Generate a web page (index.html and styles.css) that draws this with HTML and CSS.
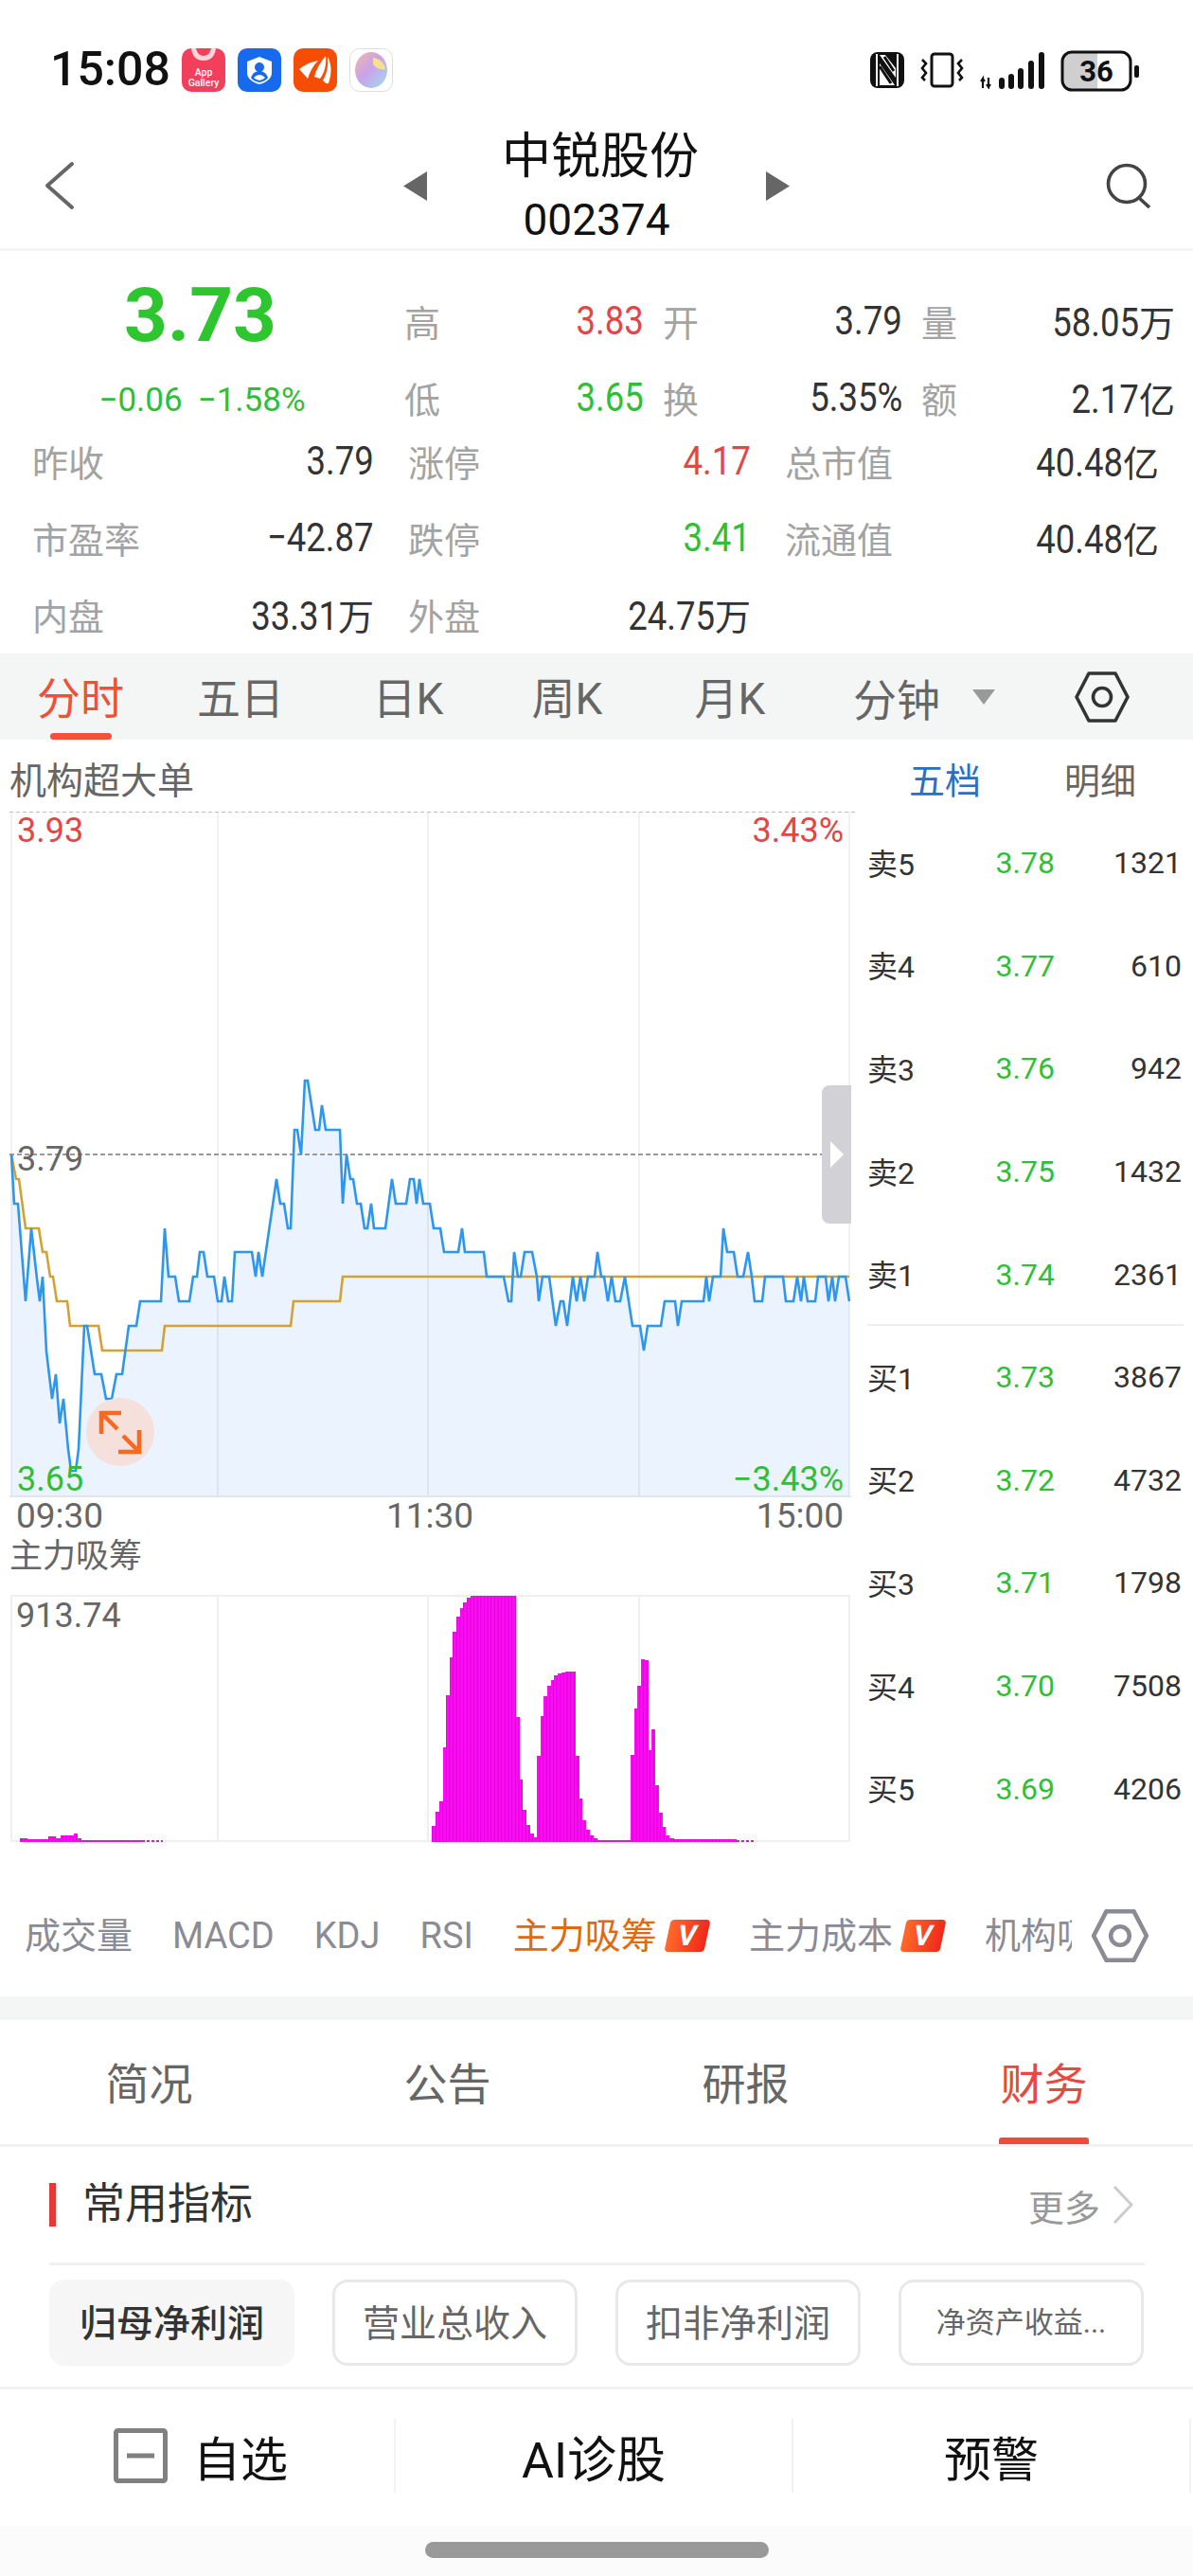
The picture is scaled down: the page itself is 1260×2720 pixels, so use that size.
FILE: index.html
```html
<!DOCTYPE html>
<html lang="zh-CN">
<head>
  <meta charset="UTF-8" />
  <title>中锐股份 002374</title>
  <link rel="stylesheet" href="styles.css">
</head>
<body>
  <div class="statusbar">
    <span class="clock">15:08</span>
    <svg class="app-icon" viewBox="0 0 46 46">
      <rect width="46" height="46" rx="10" fill="#f2405c"/>
      <path d="M10 0c1 9 6 13 13 13s12-4 13-13h-5c-1 5-4 8-8 8s-7-3-8-8z" fill="#fbd5da"/>
      <text x="23" y="29" text-anchor="middle" class="app-text">App</text>
      <text x="23" y="40" text-anchor="middle" class="app-text">Gallery</text>
    </svg>
    <svg class="app-icon" viewBox="0 0 46 46">
      <rect width="46" height="46" rx="10" fill="#1769ee"/>
      <path d="M23 9l13 5v12c0 6-6 10-13 12-7-2-13-6-13-12V14z" fill="#fff"/>
      <circle cx="23" cy="20" r="5" fill="#1769ee"/>
      <path d="M14 31c2-5 5-7 9-7s7 2 9 7c-2 3-5 4-9 5-4-1-7-2-9-5z" fill="#1769ee"/>
      <path d="M17 31c2-2 4-3 6-3s4 1 6 3c-2 2-4 2-6 3-2-1-4-1-6-3z" fill="#fff"/>
    </svg>
    <svg class="app-icon" viewBox="0 0 46 46">
      <rect width="46" height="46" rx="10" fill="#f64d04"/>
      <path d="M6 22c6-5 13-8 20-9-5 5-9 12-11 19-3-3-6-7-9-10z" fill="#fff"/>
      <path d="M22 30c2-8 6-15 12-22 1 8-1 18-6 24z" fill="#fff"/>
      <path d="M31 34c4-7 6-15 5-25 4 7 5 16 1 28-2 1-4-1-6-3z" fill="#fff"/>
    </svg>
    <svg class="app-icon" viewBox="0 0 46 46">
      <defs>
        <linearGradient id="orb" x1="0" y1="0" x2="1" y2="1">
          <stop offset="0" stop-color="#f8b6a8"/>
          <stop offset=".45" stop-color="#c9a2ea"/>
          <stop offset="1" stop-color="#9fdcec"/>
        </linearGradient>
      </defs>
      <rect x=".5" y=".5" width="45" height="45" rx="10" fill="#fff" stroke="#ddd"/>
      <ellipse cx="23" cy="23" rx="17" ry="19" fill="url(#orb)"/>
      <path d="M25 10c6 0 12 5 13 12-5 1-10-1-13-5z" fill="#f6e08e"/>
    </svg>

    <div class="status-right">
      <svg class="st-nfc" viewBox="0 0 36 38">
        <rect width="36" height="38" rx="8" fill="#111"/>
        <path d="M7 2v34M29 2v34" stroke="#fff" stroke-width="2"/>
        <path d="M10 3l17 24V17L16 3zM10 35V12l16 23z" fill="#fff"/>
        <path d="M10 15l12 18M15 5l10 15" stroke="#111" stroke-width="3"/>
      </svg>
      <svg class="st-vib" viewBox="0 0 48 38">
        <rect x="13" y="2" width="22" height="34" rx="3" fill="none" stroke="#111" stroke-width="3"/>
        <path d="M3 8l4 4-4 5 4 5-4 5 3 3M45 8l-4 4 4 5-4 5 4 5-3 3" fill="none" stroke="#111" stroke-width="2.6"/>
      </svg>
      <svg class="st-signal" viewBox="0 0 69 40">
        <path d="M3 39V29l-2 3M3 29l2 3M9 28v10l-2-3M9 38l2-3" fill="none" stroke="#111" stroke-width="2.2"/>
        <rect x="20" y="28" width="6" height="12" rx="3" fill="#111"/>
        <rect x="30" y="24" width="6" height="16" rx="3" fill="#111"/>
        <rect x="40" y="18" width="6" height="22" rx="3" fill="#111"/>
        <rect x="51" y="10" width="6" height="30" rx="3" fill="#111"/>
        <rect x="62" y="1" width="6" height="39" rx="3" fill="#111"/>
      </svg>
      <svg class="st-batt" viewBox="0 0 83 44">
        <path d="M10 3h29v38H10a7 7 0 0 1-7-7V10a7 7 0 0 1 7-7z" fill="#cfcfcf"/>
        <rect x="2" y="2" width="72" height="40" rx="10" fill="none" stroke="#111" stroke-width="3"/>
        <rect x="78" y="16" width="5" height="13" rx="2" fill="#111"/>
        <text x="38" y="33" text-anchor="middle" class="batt-text">36</text>
      </svg>
    </div>
  </div>

  <header class="nav">
    <div class="nav-side">
      <svg class="back" viewBox="0 0 34 52"><path d="M30 3L4 26l26 23" fill="none" stroke="#666" stroke-width="4" stroke-linecap="round" stroke-linejoin="round"/></svg>
      <svg class="nav-tri" viewBox="0 0 25 31"><path d="M25 0v31L0 15.5z" fill="#666"/></svg>
    </div>
    <div class="nav-title">
      <div class="stock-name">中锐股份</div>
      <div class="stock-code">002374</div>
    </div>
    <div class="nav-side nav-side-right">
      <svg class="nav-tri" viewBox="0 0 25 31"><path d="M0 0v31l25-15.5z" fill="#666"/></svg>
      <svg class="search" viewBox="0 0 48 48"><circle cx="22" cy="22" r="19.5" fill="none" stroke="#444" stroke-width="3.6"/><path d="M34 36l12 11" stroke="#444" stroke-width="3.6"/></svg>
    </div>
  </header>

  <section class="quote">
    <div class="price">3.73</div>
    <span class="lbl">高</span><span class="val red"><span class="num">3.83</span></span>
    <span class="lbl">开</span><span class="val"><span class="num">3.79</span></span>
    <span class="lbl">量</span><span class="val"><span class="num">58.05</span>万</span>
    <div class="change"><span>−0.06</span><span>−1.58%</span></div>
    <span class="lbl">低</span><span class="val green"><span class="num">3.65</span></span>
    <span class="lbl">换</span><span class="val"><span class="num">5.35%</span></span>
    <span class="lbl">额</span><span class="val"><span class="num">2.17</span>亿</span>
  </section>

  <section class="stats">
    <div class="stat"><span class="lbl">昨收</span><span class="val"><span class="num">3.79</span></span></div>
    <div class="stat"><span class="lbl">涨停</span><span class="val red"><span class="num">4.17</span></span></div>
    <div class="stat"><span class="lbl">总市值</span><span class="val"><span class="num">40.48</span>亿</span></div>
    <div class="stat"><span class="lbl">市盈率</span><span class="val"><span class="num">−42.87</span></span></div>
    <div class="stat"><span class="lbl">跌停</span><span class="val green"><span class="num">3.41</span></span></div>
    <div class="stat"><span class="lbl">流通值</span><span class="val"><span class="num">40.48</span>亿</span></div>
    <div class="stat"><span class="lbl">内盘</span><span class="val"><span class="num">33.31</span>万</span></div>
    <div class="stat"><span class="lbl">外盘</span><span class="val"><span class="num">24.75</span>万</span></div>
  </section>

  <nav class="period-tabs">
    <div class="ptab active">分时<i class="ptab-line"></i></div>
    <div class="ptab">五日</div>
    <div class="ptab">日K</div>
    <div class="ptab">周K</div>
    <div class="ptab">月K</div>
    <div class="ptab-more">
      <span>分钟</span>
      <i class="tri-down"></i>
      <svg class="hex" viewBox="0 0 58 54"><path d="M15 2h28l13 25-13 25H15L2 27z" fill="none" stroke="#333" stroke-width="3.6" stroke-linejoin="round"/><circle cx="29" cy="27" r="9.5" fill="none" stroke="#333" stroke-width="3.6"/></svg>
    </div>
  </nav>

  <section class="market">
    <div class="charts">
      <div class="chart-title">机构超大单</div>
      <svg class="price-chart" viewBox="0 857 905 726">
        <path class="area" d="M12 1219L15 1271H19L27 1374L33 1297L39 1350L42 1374L45 1348L49 1427L55 1477L59 1451L63 1503L67 1477L72 1530L75 1553H80L83 1530L89 1400H92L100 1451H107L112 1477H118L123 1451H129L136 1400H144L148 1374H170L174 1297L178 1348H185L189 1374H200L204 1348H208L211 1322H215L219 1348H226L230 1374H234L237 1348L241 1374H245L248 1322H266L270 1348L273 1322L277 1348L292 1245L296 1271H300L304 1297H307L311 1193H314L318 1219L322 1141H325L333 1193H337L340 1167L344 1193H359L362 1271L366 1219L370 1245H373L377 1271H381L385 1297H388L392 1271L395 1297H407L414 1245L418 1271H429L433 1245H437L440 1271L443 1245L447 1271H454L458 1297H465L469 1322H484L488 1297L491 1322H511L514 1348H532L537 1374H540L543 1322L547 1348H550L554 1322H562L567 1348L569 1374L573 1348H580L587 1400L592 1374H595L599 1400L605 1348L609 1374L613 1348L617 1374L621 1348H628L631 1322L635 1348H638L642 1374L646 1348L650 1374H655L660 1348L668 1400H676L680 1426L684 1400H698L702 1374H713L716 1400L720 1374H743L746 1348L749 1374L753 1348H761L764 1297L768 1322H775L779 1348H785L790 1322L794 1348L797 1374H805L808 1348H827L830 1374H838L842 1348L846 1374L849 1348L853 1374H861L864 1348H872L875 1374L879 1348L882 1374L886 1348H893L897 1374V1580H12Z"/>
        <g class="grid">
          <path d="M12 857V1580M230 857V1580M452 857V1580M675 857V1580M897 857V1580"/>
        </g>
        <path class="axis" d="M10 1580H899"/>
        <path class="dash" d="M10 857H905"/>
        <path class="dash dash-mid" d="M10 1219H897"/>
        <path class="avg-line" d="M12 1219L17 1245H20L27 1297H41L45 1322H49L53 1348H56L60 1374H71L74 1400H104L108 1426H171L174 1400H307L310 1374H359L362 1348H897"/>
        <path class="price-line" d="M12 1219L15 1271H19L27 1374L33 1297L39 1350L42 1374L45 1348L49 1427L55 1477L59 1451L63 1503L67 1477L72 1530L75 1553H80L83 1530L89 1400H92L100 1451H107L112 1477H118L123 1451H129L136 1400H144L148 1374H170L174 1297L178 1348H185L189 1374H200L204 1348H208L211 1322H215L219 1348H226L230 1374H234L237 1348L241 1374H245L248 1322H266L270 1348L273 1322L277 1348L292 1245L296 1271H300L304 1297H307L311 1193H314L318 1219L322 1141H325L333 1193H337L340 1167L344 1193H359L362 1271L366 1219L370 1245H373L377 1271H381L385 1297H388L392 1271L395 1297H407L414 1245L418 1271H429L433 1245H437L440 1271L443 1245L447 1271H454L458 1297H465L469 1322H484L488 1297L491 1322H511L514 1348H532L537 1374H540L543 1322L547 1348H550L554 1322H562L567 1348L569 1374L573 1348H580L587 1400L592 1374H595L599 1400L605 1348L609 1374L613 1348L617 1374L621 1348H628L631 1322L635 1348H638L642 1374L646 1348L650 1374H655L660 1348L668 1400H676L680 1426L684 1400H698L702 1374H713L716 1400L720 1374H743L746 1348L749 1374L753 1348H761L764 1297L768 1322H775L779 1348H785L790 1322L794 1348L797 1374H805L808 1348H827L830 1374H838L842 1348L846 1374L849 1348L853 1374H861L864 1348H872L875 1374L879 1348L882 1374L886 1348H893L897 1374"/>
        <text x="18" y="889" class="ax red-fill">3.93</text>
        <text x="891" y="889" text-anchor="end" class="ax red-fill">3.43%</text>
        <text x="18" y="1236" class="ax grey-fill">3.79</text>
        <text x="18" y="1574" class="ax green-fill">3.65</text>
        <text x="891" y="1574" text-anchor="end" class="ax green-fill">−3.43%</text>
        <path d="M868 1154a8 8 0 0 1 8-8h23v146h-23a8 8 0 0 1-8-8z" fill="#d2d2d6"/>
        <path d="M877 1205l14 14-14 14z" fill="#fff"/>
        <circle cx="127" cy="1512" r="36" fill="#f6e0dc"/>
        <path d="M128 1492H107V1514M107 1492L124 1509M125 1533H147V1510M147 1533L130 1516" fill="none" stroke="#f56a1e" stroke-width="4.5"/>
      </svg>
      <div class="times"><span>09:30</span><span>11:30</span><span>15:00</span></div>
      <div class="sub-title">主力吸筹</div>
      <svg class="flow-chart" viewBox="0 1680 905 270">
        <defs>
          <pattern id="bars" patternUnits="userSpaceOnUse" width="3.65" height="10">
            <rect width="3.65" height="10" fill="#fb0cf2"/>
            <rect width=".9" height="10" fill="#dc00d6"/>
          </pattern>
        </defs>
        <path class="flow-grid" d="M12 1685H897V1944H12ZM230 1685V1944M452 1685V1944M675 1685V1944"/>
        <path fill="url(#bars)" d="M21 1945V1941H29V1942H51V1939H59V1941H64V1938H78V1936H82V1941H86V1943H150V1945Z"/>
        <path fill="url(#bars)" d="M456 1945V1928H460V1913H464V1902H468V1845H471V1790H475V1750H478V1723H482V1707H486V1698H489V1692H493V1687H497V1685H545V1813H549V1879H552V1911H556V1927H560V1936H564V1940H567V1854H571V1812H574V1791H578V1780H582V1774H585V1769H589V1767H593V1766H597V1765H608V1854H612V1899H615V1922H619V1932H623V1938H627V1941H631V1943H666V1853H670V1804H673V1780H677V1752H681V1753H685V1848H688V1826H692V1885H696V1914H700V1929H703V1938H707V1941H712V1942H778V1945Z"/>
        <path d="M150 1944H172M778 1944H798" stroke="#c626c6" stroke-width="2" stroke-dasharray="3 2"/>
        <text x="17" y="1718" class="ax grey-fill">913.74</text>
      </svg>
    </div>

    <aside class="book">
      <div class="book-tabs"><span class="blue">五档</span><span>明细</span></div>
      <div class="book-row"><span class="side">卖5</span><span class="p">3.78</span><span class="q">1321</span></div>
      <div class="book-row"><span class="side">卖4</span><span class="p">3.77</span><span class="q">610</span></div>
      <div class="book-row"><span class="side">卖3</span><span class="p">3.76</span><span class="q">942</span></div>
      <div class="book-row"><span class="side">卖2</span><span class="p">3.75</span><span class="q">1432</span></div>
      <div class="book-row"><span class="side">卖1</span><span class="p">3.74</span><span class="q">2361</span></div>
      <div class="book-rule"></div>
      <div class="book-row"><span class="side">买1</span><span class="p">3.73</span><span class="q">3867</span></div>
      <div class="book-row"><span class="side">买2</span><span class="p">3.72</span><span class="q">4732</span></div>
      <div class="book-row"><span class="side">买3</span><span class="p">3.71</span><span class="q">1798</span></div>
      <div class="book-row"><span class="side">买4</span><span class="p">3.70</span><span class="q">7508</span></div>
      <div class="book-row"><span class="side">买5</span><span class="p">3.69</span><span class="q">4206</span></div>
    </aside>
  </section>

  <div class="indicators">
    <span>成交量</span>
    <span>MACD</span>
    <span>KDJ</span>
    <span>RSI</span>
    <span class="ind-on">主力吸筹</span><i class="vip">V</i>
    <span>主力成本</span><i class="vip">V</i>
    <span class="ind-clip">机构吸筹</span>
    <svg class="ind-hex" viewBox="0 0 58 54"><path d="M15 2h28l13 25-13 25H15L2 27z" fill="none" stroke="#8b8b95" stroke-width="4.4" stroke-linejoin="round"/><circle cx="29" cy="27" r="9.5" fill="none" stroke="#8b8b95" stroke-width="4.4"/></svg>
  </div>

  <div class="band"></div>

  <nav class="detail-tabs">
    <div class="dtab">简况</div>
    <div class="dtab">公告</div>
    <div class="dtab">研报</div>
    <div class="dtab active">财务<i class="dtab-line"></i></div>
  </nav>

  <section class="finance">
    <div class="finance-head">
      <h2>常用指标</h2>
      <span class="more">更多</span>
      <svg class="more-arrow" viewBox="0 0 22 40"><path d="M2 1l18 19L2 39" fill="none" stroke="#ccc" stroke-width="3"/></svg>
    </div>
    <div class="chips">
      <div class="chip chip-on">归母净利润</div>
      <div class="chip">营业总收入</div>
      <div class="chip">扣非净利润</div>
      <div class="chip chip-small">净资产收益...</div>
    </div>
  </section>

  <footer class="actions">
    <div class="action action-watch">
      <svg class="watch" viewBox="0 0 57 58"><rect x="2.5" y="2.5" width="52" height="53" rx="2" fill="none" stroke="#808080" stroke-width="5"/><path d="M14 29h29" stroke="#808080" stroke-width="5"/></svg>
      自选
    </div>
    <div class="action action-wide">AI诊股</div>
    <div class="action">预警</div>
  </footer>

  <div class="home-area"><div class="home-bar"></div></div>
</body>
</html>
```

FILE: styles.css
```css
* { box-sizing: border-box; }
html, body { margin: 0; padding: 0; }
body { width: 1260px; height: 2720px; overflow: hidden; background: #fff; color: #333; font-family: Roboto, "Noto Sans CJK SC", sans-serif; }
i { font-style: normal; }
svg { display: block; flex: none; }

.statusbar { height: 130px; display: flex; align-items: flex-start; padding: 51px 57px 0 53px; }
.clock { font-size: 50px; line-height: 44px; font-weight: 500; color: #111; margin-right: 12px; }
.app-icon { width: 46px; height: 46px; margin-right: 13px; }
.app-text { font: 500 10.5px Roboto, sans-serif; fill: #fff; }
.status-right { margin-left: auto; display: flex; gap: 16px; align-items: flex-end; height: 46px; }
.st-nfc { width: 36px; height: 38px; margin-bottom: 4px; }
.st-vib { width: 48px; height: 38px; margin-bottom: 4px; }
.st-signal { width: 69px; height: 40px; margin-bottom: 3px; }
.st-batt { width: 83px; height: 44px; }
.batt-text { font: 700 31px Roboto, sans-serif; fill: #111; }

.nav { height: 135px; display: grid; grid-template-columns: 1fr 200px 1fr; column-gap: 79px; border-bottom: 3px solid #f4f6f6; }
.nav-side { display: flex; align-items: center; justify-content: space-between; padding-left: 46px; }
.nav-side-right { padding-left: 0; padding-right: 44px; }
.back { width: 34px; height: 52px; }
.nav-tri { width: 25px; height: 31px; }
.search { width: 48px; height: 48px; }
.nav-title { text-align: center; padding-top: 6px; white-space: nowrap; }
.stock-name { font-size: 52px; line-height: 60px; color: #111; }
.stock-code { font-size: 46px; line-height: 60px; margin-top: 6px; color: #111; }

.lbl { font-size: 38px; color: #a3a3a3; white-space: nowrap; }
.val { font-size: 38px; color: #333; text-align: right; white-space: nowrap; }
.num { display: inline-block; font-size: 43px; transform: scaleX(.85); transform-origin: right center; }
.red { color: #e24646; }
.green { color: #2fbf37; }

.quote { display: grid; grid-template-columns: 407px 38px 195px 38px 195px 38px 210px; column-gap: 20px; row-gap: 21px; grid-auto-rows: 60px; align-items: center; padding-top: 43px; }
.price { font-size: 80px; line-height: 60px; font-weight: 700; color: #2dc62f; text-align: center; padding-left: 16px; margin-top: -11px; }
.change { display: flex; justify-content: center; gap: 16px; padding: 6px 0 0 20px; font-size: 35px; color: #2fbf37; }

.stats { display: grid; grid-template-columns: 361px 362px 395px; column-gap: 36px; row-gap: 21px; grid-auto-rows: 60px; padding: 7px 0 0 34px; }
.stat { display: flex; align-items: center; justify-content: space-between; }

.period-tabs { height: 91px; margin-top: 12px; background: #f4f6f6; display: grid; grid-template-columns: 170px 168px 186px 150px 194px 392px; align-items: center; font-size: 46px; color: #666; }
.ptab { height: 91px; padding-top: 5px; line-height: 86px; text-align: center; display: flex; flex-direction: column; align-items: center; }
.ptab.active { color: #ee5038; }
.ptab-line { display: block; width: 65px; height: 8px; border-radius: 4px; background: #f5503a; margin-top: -7px; }
.ptab-more { display: flex; align-items: center; padding-left: 33px; }
.tri-down { width: 0; height: 0; margin-left: 34px; border-left: 12.5px solid transparent; border-right: 12.5px solid transparent; border-top: 16px solid #999; }
.hex { width: 58px; height: 54px; margin-left: 84px; }

.market { display: flex; height: 1169px; }
.charts { width: 905px; }
.chart-title { height: 76px; padding: 24px 0 0 10px; font-size: 39px; line-height: 40px; color: #666; }
.price-chart { width: 905px; height: 726px; }
.area { fill: #eaf3fe; }
.grid path { stroke: rgba(30, 50, 80, .07); stroke-width: 2; fill: none; }
.axis { stroke: #dfe6ee; stroke-width: 2; }
.dash { stroke: #aaa; stroke-width: 1.5; stroke-dasharray: 4 3; }
.dash-mid { stroke: #999; stroke-width: 2; stroke-dasharray: 5 3; }
.avg-line { fill: none; stroke: #d3a237; stroke-width: 2.6; }
.price-line { fill: none; stroke: #2f96ee; stroke-width: 2.6; }
.ax { font: 36px Roboto, sans-serif; }
.red-fill { fill: #e24646; }
.green-fill { fill: #2fbf37; }
.grey-fill { fill: #666; }
.times { height: 36px; line-height: 36px; display: flex; justify-content: space-between; padding: 0 14px 0 17px; font-size: 37px; color: #666; }
.sub-title { height: 61px; padding-left: 10px; font-size: 35px; line-height: 50px; color: #666; }
.flow-chart { width: 905px; height: 270px; }
.flow-grid { fill: none; stroke: #efefef; stroke-width: 2; }

.book { width: 355px; font-size: 32px; color: #333; }
.book-tabs { height: 76px; display: flex; gap: 88px; padding: 22px 0 0 55px; font-size: 38px; line-height: 44px; color: #666; }
.blue { color: #2b6fc4; }
.book-row { height: 108.6px; display: grid; grid-template-columns: 100px 98px 134px; align-items: center; padding-left: 11px; }
.book-row .side { margin-top: -3px; }
.book-row .p { color: #2fbf37; text-align: right; }
.book-row .q { text-align: right; }
.book-rule { height: 2px; margin: -2px 10px 0 11px; background: #eee; }

.indicators { height: 158px; display: flex; align-items: center; padding: 30px 0 0 26px; gap: 42px; font-size: 38px; line-height: 44px; color: #8b8b95; white-space: nowrap; }
.ind-on { color: #e06a10; }
.vip { width: 42px; height: 34px; margin: 0 2px 0 -31px; border-radius: 4px; background: linear-gradient(90deg, #ff6a2a, #ef281c); transform: skewX(-12deg); color: #fff; font-size: 30px; line-height: 34px; font-weight: 700; text-align: center; }
.ind-clip { width: 92px; overflow: hidden; }
.ind-hex { width: 60px; height: 56px; margin-left: -21px; }

.band { height: 25px; background: #f4f6f6; }

.detail-tabs { height: 131px; display: grid; grid-template-columns: repeat(4, 315px); font-size: 46px; color: #666; }
.dtab { display: flex; flex-direction: column; align-items: center; padding-top: 41px; line-height: 54px; }
.dtab.active { color: #e5493f; }
.dtab-line { display: block; width: 95px; height: 7px; margin-top: auto; background: #ee4b38; border-radius: 3px 3px 0 0; }

.finance { padding: 0 51px 0 52px; border-top: 3px solid #f2f2f2; border-bottom: 3px solid #f2f2f2; height: 259px; }
.finance-head { height: 125px; display: flex; align-items: center; border-bottom: 3px solid #f0f0f0; }
.finance-head h2 { margin: 0 auto 0 0; padding-left: 28px; border-left: 7px solid #e53935; font-size: 45px; font-weight: 400; line-height: 46px; color: #333; }
.more { font-size: 38px; color: #999; }
.more-arrow { width: 22px; height: 40px; margin-left: 13px; margin-right: 12px; }
.chips { display: grid; grid-template-columns: repeat(4, 259px); column-gap: 40px; padding-top: 15px; }
.chip { height: 91px; padding-bottom: 6px; display: flex; align-items: center; justify-content: center; border: 3px solid #e8e8e8; border-radius: 16px; font-size: 39px; color: #666; white-space: nowrap; }
.chip-on { border-color: #f6f6f6; background: #f6f6f6; color: #333; font-weight: 500; }
.chip-small { font-size: 31px; }

.actions { height: 144px; display: grid; grid-template-columns: 418px 420px 420px; align-items: center; padding-bottom: 4px; font-size: 50px; color: #111; }
.action { height: 78px; display: flex; align-items: center; justify-content: center; gap: 27px; border-right: 2px solid #f2f2f2; }
.action-watch { padding-left: 8px; }
.action-wide { font-size: 52px; }
.watch { width: 57px; height: 58px; }

.home-area { height: 53px; background: #fbfbfb; padding-top: 17px; }
.home-bar { width: 363px; height: 17px; margin-left: 449px; border-radius: 9px; background: #999; }
```
